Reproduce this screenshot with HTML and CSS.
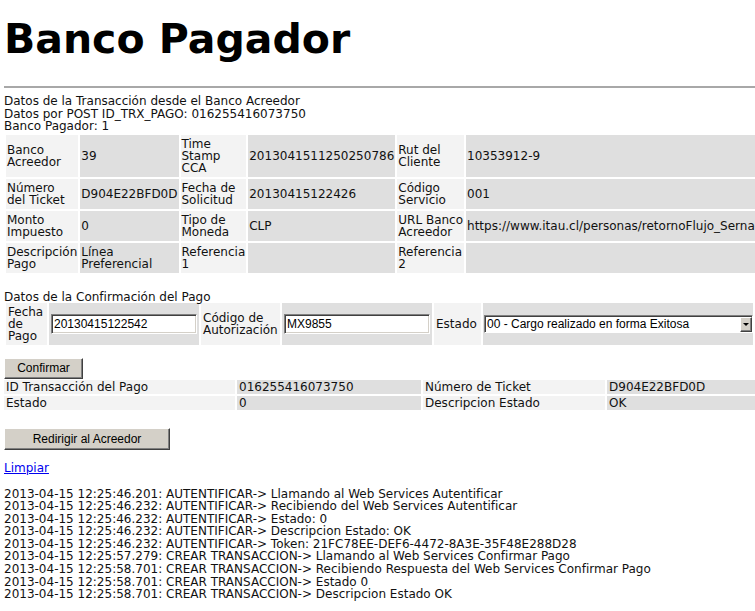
FILE: index.html
```html
<!DOCTYPE html>
<html lang="es">
<head>
<meta charset="utf-8">
<title>Banco Pagador</title>
<link rel="stylesheet" href="styles.css">
</head>
<body>
<div class="page">
  <h1 class="title">Banco Pagador</h1>
  <hr class="rule">
  <div class="intro">
    <div>Datos de la Transacción desde el Banco Acreedor</div>
    <div>Datos por POST ID_TRX_PAGO: 016255416073750</div>
    <div>Banco Pagador: 1</div>
  </div>

  <table class="data">
    <tr>
      <td class="lbl l1">Banco Acreedor</td>
      <td class="val v1">39</td>
      <td class="lbl l2">Time Stamp CCA</td>
      <td class="val v2">2013041511250250786</td>
      <td class="lbl l3">Rut del Cliente</td>
      <td class="val v3">10353912-9</td>
    </tr>
    <tr>
      <td class="lbl l1">Número del&nbsp;Ticket</td>
      <td class="val v1">D904E22BFD0D</td>
      <td class="lbl l2">Fecha de Solicitud</td>
      <td class="val v2">20130415122426</td>
      <td class="lbl l3">Código Servicio</td>
      <td class="val v3">001</td>
    </tr>
    <tr>
      <td class="lbl l1">Monto Impuesto</td>
      <td class="val v1">0</td>
      <td class="lbl l2">Tipo de Moneda</td>
      <td class="val v2">CLP</td>
      <td class="lbl l3">URL&nbsp;Banco Acreedor</td>
      <td class="val v3">https://www.itau.cl/personas/retornoFlujo_Sernac.jsp?idTrx=016255416073750</td>
    </tr>
    <tr>
      <td class="lbl l1">Descripción Pago</td>
      <td class="val v1">Línea Preferencial</td>
      <td class="lbl l2">Referencia 1</td>
      <td class="val v2"></td>
      <td class="lbl l3">Referencia 2</td>
      <td class="val v3"></td>
    </tr>
  </table>

  <div class="section-title">Datos de la Confirmación del Pago</div>
  <table class="data form">
    <tr>
      <td class="lbl f-l1">Fecha de Pago</td>
      <td class="val f-in"><input class="field" type="text" value="20130415122542"></td>
      <td class="lbl f-l2">Código de Autorización</td>
      <td class="val f-in"><input class="field" type="text" value="MX9855"></td>
      <td class="lbl f-l3">Estado</td>
      <td class="val f-sel">
        <span class="combo-wrap">
          <select class="combo"><option>00 - Cargo realizado en forma Exitosa</option></select>
          <span class="combo-btn"></span>
        </span>
      </td>
    </tr>
  </table>

  <button class="btn btn-confirm" type="button">Confirmar</button>

  <table class="result">
    <tr>
      <td class="lbl r1">ID Transacción del Pago</td>
      <td class="val r2">016255416073750</td>
      <td class="lbl r3">Número de Ticket</td>
      <td class="val">D904E22BFD0D</td>
    </tr>
    <tr>
      <td class="lbl">Estado</td>
      <td class="val">0</td>
      <td class="lbl">Descripcion Estado</td>
      <td class="val">OK</td>
    </tr>
  </table>

  <button class="btn btn-redirect" type="button">Redirigir al Acreedor</button>

  <div class="links"><a class="link" href="#">Limpiar</a></div>

  <div class="log">
    <div>2013-04-15 12:25:46.201: AUTENTIFICAR-&gt; Llamando al Web Services Autentificar</div>
    <div>2013-04-15 12:25:46.232: AUTENTIFICAR-&gt; Recibiendo del Web Services Autentificar</div>
    <div>2013-04-15 12:25:46.232: AUTENTIFICAR-&gt; Estado: 0</div>
    <div>2013-04-15 12:25:46.232: AUTENTIFICAR-&gt; Descripcion Estado: OK</div>
    <div>2013-04-15 12:25:46.232: AUTENTIFICAR-&gt; Token: 21FC78EE-DEF6-4472-8A3E-35F48E288D28</div>
    <div>2013-04-15 12:25:57.279: CREAR TRANSACCION-&gt; Llamando al Web Services Confirmar Pago</div>
    <div>2013-04-15 12:25:58.701: CREAR TRANSACCION-&gt; Recibiendo Respuesta del Web Services Confirmar Pago</div>
    <div>2013-04-15 12:25:58.701: CREAR TRANSACCION-&gt; Estado 0</div>
    <div>2013-04-15 12:25:58.701: CREAR TRANSACCION-&gt; Descripcion Estado OK</div>
  </div>
</div>
</body>
</html>
```

FILE: styles.css
```css
html {
  overflow: hidden;
  background: #fff;
}

body {
  margin: 0;
  font-family: "DejaVu Sans", Verdana, sans-serif;
  font-size: 12px;
  color: #111;
}

.page {
  padding: 16px 0 20px 4px;
}

.title {
  margin: 0;
  font-size: 41px;
  line-height: 47px;
  font-weight: bold;
  color: #000;
}

.rule {
  margin: 23px 0 0;
  border: 0;
  height: 2px;
  background: #a8a8a8;
}

.intro {
  margin-top: 7px;
  line-height: 12.5px;
}

/* data tables */
.data {
  border-spacing: 2px;
  line-height: 12px;
}

.data td {
  padding: 3px 1px;
  vertical-align: middle;
  text-align: left;
}

.lbl {
  background: #f3f3f3;
}

.val {
  background: #dfdfdf;
}

.l1, .l2, .l3, .v1, .v2 { width: 1px; }
.v2, .v3 { white-space: nowrap; }

.section-title {
  margin: 16px 0 -2px;
  line-height: 12px;
}

/* form table */
.form {
  table-layout: fixed;
  width: 100%;
}

.form td { padding: 3px 2px; }
.form .f-l1 { width: 37px; }
.form .f-l2 { width: 75px; }
.form .f-l3 { width: 43px; }
.form .f-in { width: 146px; }
.form .f-sel { padding: 2px 0 2px 1px; }

.field {
  display: block;
  box-sizing: border-box;
  width: 146px;
  height: 20px;
  margin: 0;
  padding: 0 2px;
  font-family: "Liberation Sans", Arial, sans-serif;
  font-size: 12px;
  color: #000;
  background: #fff;
  border: 1px solid;
  border-color: #808080 #fff #fff #808080;
  box-shadow: inset 1px 1px 0 #404040, inset -1px -1px 0 #d4d0c8;
  outline: none;
}

.combo-wrap {
  position: relative;
  display: block;
}

.combo {
  display: block;
  box-sizing: border-box;
  width: 100%;
  height: 18px;
  margin: 0;
  padding: 0 0 0 2px;
  font-family: "Liberation Sans", Arial, sans-serif;
  font-size: 12px;
  color: #000;
  background: #fff;
  border: 1px solid;
  border-color: #808080 #fff #fff #808080;
  box-shadow: inset 1px 1px 0 #404040;
  border-radius: 0;
  appearance: none;
  -webkit-appearance: none;
  outline: none;
}

.combo-btn {
  position: absolute;
  top: 2px;
  right: 1px;
  bottom: 1px;
  width: 12px;
  box-sizing: border-box;
  background: #d4d0c8;
  border: 1px solid;
  border-color: #fff #404040 #404040 #fff;
  box-shadow: inset -1px -1px 0 #808080;
}

.combo-btn::after {
  content: "";
  position: absolute;
  left: 2px;
  top: 5px;
  border-left: 3px solid transparent;
  border-right: 3px solid transparent;
  border-top: 3px solid #000;
}

/* buttons */
.btn {
  display: block;
  box-sizing: border-box;
  padding: 0;
  font-family: "Liberation Sans", Arial, sans-serif;
  font-size: 12px;
  color: #000;
  background: #d4d0c8;
  border: 1px solid;
  border-color: #fff #404040 #404040 #fff;
  box-shadow: inset -1px -1px 0 #808080;
}

.btn-confirm {
  width: 79px;
  height: 21px;
  margin-top: 11px;
}

.btn-redirect {
  width: 166px;
  height: 22px;
  margin-top: 16px;
}

/* result table */
.result {
  table-layout: fixed;
  width: calc(100% + 4px);
  margin: -1px 0 0 -2px;
  border-spacing: 2px;
  line-height: 14px;
}

.result td {
  padding: 0 2px;
}

.result .r1 { width: 227px; }
.result .r2 { width: 180px; }
.result .r3 { width: 178px; }

.links {
  margin-top: 12px;
  line-height: 12px;
}

.link {
  color: #0000ee;
  text-decoration: underline;
}

.log {
  margin-top: 14px;
  line-height: 12.6px;
  white-space: nowrap;
}
```
